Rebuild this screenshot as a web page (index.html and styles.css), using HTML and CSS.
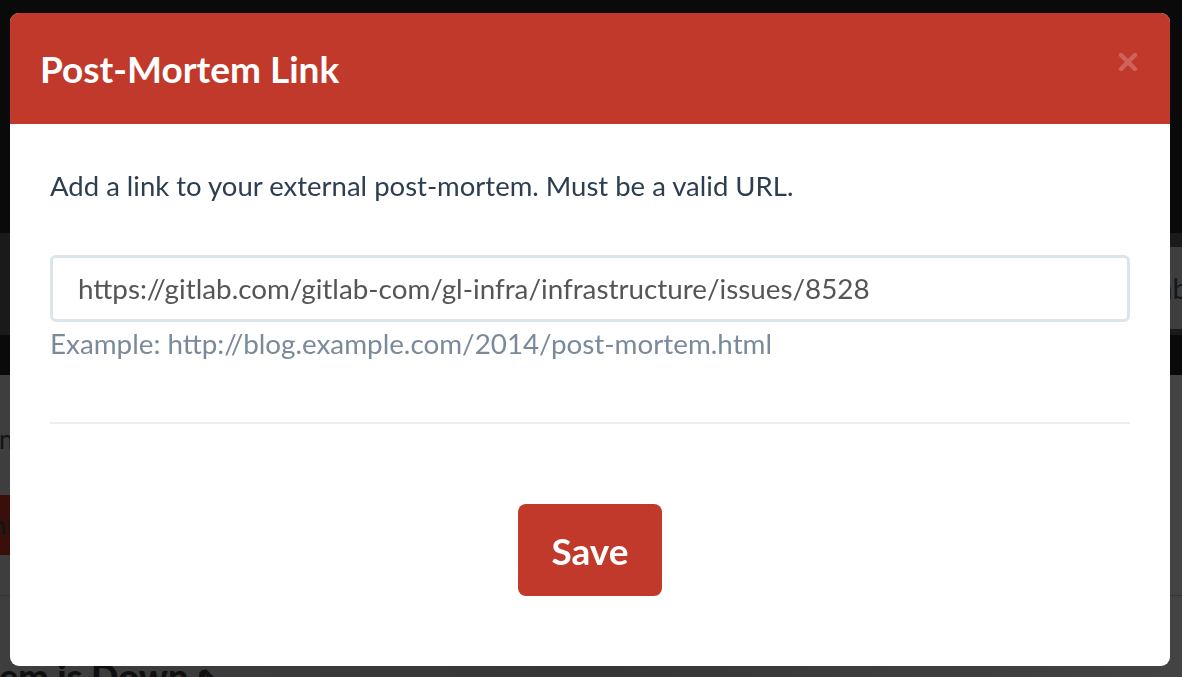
FILE: index.html
```html
<!DOCTYPE html>
<html lang="en">
<head>
<meta charset="utf-8">
<title>Post-Mortem Link</title>
<link rel="stylesheet" href="styles.css">
</head>
<body>
<div class="page">
  <header class="topbar"></header>
  <div class="toolbar">
    <div class="toolbar-spacer"></div>
    <div class="search">labels</div>
  </div>
  <div class="band"></div>
  <main class="content">
    <p class="content-text">Incident status: Investigating</p>
    <div class="content-row">
      <button class="ghost-btn" type="button">Incident</button>
    </div>
    <hr class="content-rule">
    <h1 class="incident-title">System is Down <span class="pencil">&#9998;</span></h1>
  </main>
</div>

<div class="backdrop">
  <div class="modal" role="dialog" aria-labelledby="modal-title">
    <div class="modal-header">
      <h2 class="modal-title" id="modal-title">Post-Mortem Link</h2>
      <button class="modal-close" type="button" aria-label="Close">
        <svg width="20" height="20" viewBox="0 0 20 20"><path d="M3 3 L17 17 M17 3 L3 17" stroke="currentColor" stroke-width="4.4" stroke-linecap="round" fill="none"/></svg>
      </button>
    </div>
    <div class="modal-body">
      <p class="modal-intro">Add a link to your external post-mortem. Must be a valid URL.</p>
      <div class="field">
        <input class="field-input" type="text" value="https://gitlab.com/gitlab-com/gl-infra/infrastructure/issues/8528">
        <div class="field-help">Example: http://blog.example.com/2014/post-mortem.html</div>
      </div>
      <hr class="modal-rule">
      <div class="modal-actions">
        <button class="btn-save" type="button">Save</button>
      </div>
    </div>
  </div>
</div>
</body>
</html>
```

FILE: styles.css
```css
* { box-sizing: border-box; }

html, body {
  margin: 0;
  padding: 0;
  height: 100%;
  overflow: hidden;
}

body {
  font-family: Lato, "Open Sans", "Liberation Sans", sans-serif;
  background: #3c3c3c;
}

/* ---------- dimmed page behind the modal ---------- */
.page {
  display: flex;
  flex-direction: column;
  min-height: 100%;
}

.topbar {
  height: 233px;
  background: #0a0a0a;
}

.toolbar {
  height: 102px;
  background: #1a1a1a;
  display: flex;
  align-items: center;
}

.toolbar-spacer { flex: 1; }

.search {
  width: 40px;
  height: 82px;
  margin-top: 8px;
  background: #3e3e3e;
  color: #101820;
  font-size: 28px;
  display: flex;
  align-items: center;
  padding-left: 10px;
  white-space: nowrap;
  overflow: hidden;
}

.band {
  height: 40px;
  background: #0a0a0a;
}

.content {
  flex: 1;
  background: linear-gradient(90deg, #3e3e3e 0%, #363636 50%, #434343 100%);
  padding: 52px 0 0 0;
  display: flex;
  flex-direction: column;
}

.content-text {
  margin: 0 0 0 -8px;
  font-size: 26px;
  color: #141414;
  line-height: 24px;
  white-space: nowrap;
}

.content-row {
  margin-top: 44px;
}

.ghost-btn {
  margin-left: -80px;
  height: 60px;
  width: 96px;
  border: 0;
  background: #3a0f0b;
  color: #141414;
  font-family: inherit;
  font-weight: 700;
  font-size: 26px;
  text-align: right;
  padding: 0;
  white-space: nowrap;
  overflow: hidden;
}

.content-rule {
  margin: 40px 0 0 0;
  border: 0;
  border-top: 1px solid #353535;
}

.incident-title {
  margin: 60px 0 0 -68px;
  font-size: 36px;
  font-weight: 900;
  color: #0f0f0f;
  white-space: nowrap;
  line-height: 40px;
}

.pencil { font-size: 28px; }

/* ---------- modal ---------- */
.backdrop {
  position: fixed;
  inset: 0;
  padding: 13px 12px 11px 10px;
  display: flex;
  flex-direction: column;
}

.modal {
  height: 653px;
  background: #ffffff;
  border-radius: 9px;
  overflow: hidden;
  display: flex;
  flex-direction: column;
}

.modal-header {
  height: 111px;
  flex: none;
  background: #c0392b;
  display: flex;
  align-items: center;
  justify-content: space-between;
  padding: 0 32px 0 30px;
}

.modal-title {
  margin: 0;
  color: #ffffff;
  font-size: 37px;
  font-weight: 700;
  line-height: 1;
}

.modal-close {
  border: 0;
  background: none;
  padding: 0;
  margin-top: -14px;
  color: rgba(255, 255, 255, 0.22);
  display: flex;
  cursor: pointer;
}

.modal-body {
  padding: 39px 40px 0 40px;
  display: flex;
  flex-direction: column;
}

.modal-intro {
  margin: 0;
  font-size: 27.5px;
  line-height: 46px;
  color: #2c3e50;
}

.field {
  margin-top: 46px;
  display: flex;
  flex-direction: column;
}

.field-input {
  height: 67px;
  border: 3px solid #dce4ec;
  border-radius: 6px;
  padding: 0 25px;
  font-family: inherit;
  font-size: 27.8px;
  color: #555555;
  background: #fff;
  outline: none;
}

.field-help {
  margin-top: 5px;
  font-size: 27.8px;
  line-height: 34px;
  color: #7b8a9b;
}

.modal-rule {
  margin: 61px 0 0 0;
  border: 0;
  border-top: 2px solid #eeeeee;
}

.modal-actions {
  display: flex;
  justify-content: center;
  padding-top: 80px;
}

.btn-save {
  width: 144px;
  height: 92px;
  border: 0;
  border-radius: 8px;
  background: #c0392b;
  color: #ffffff;
  font-family: inherit;
  font-size: 37px;
  font-weight: 700;
  cursor: pointer;
}
```
